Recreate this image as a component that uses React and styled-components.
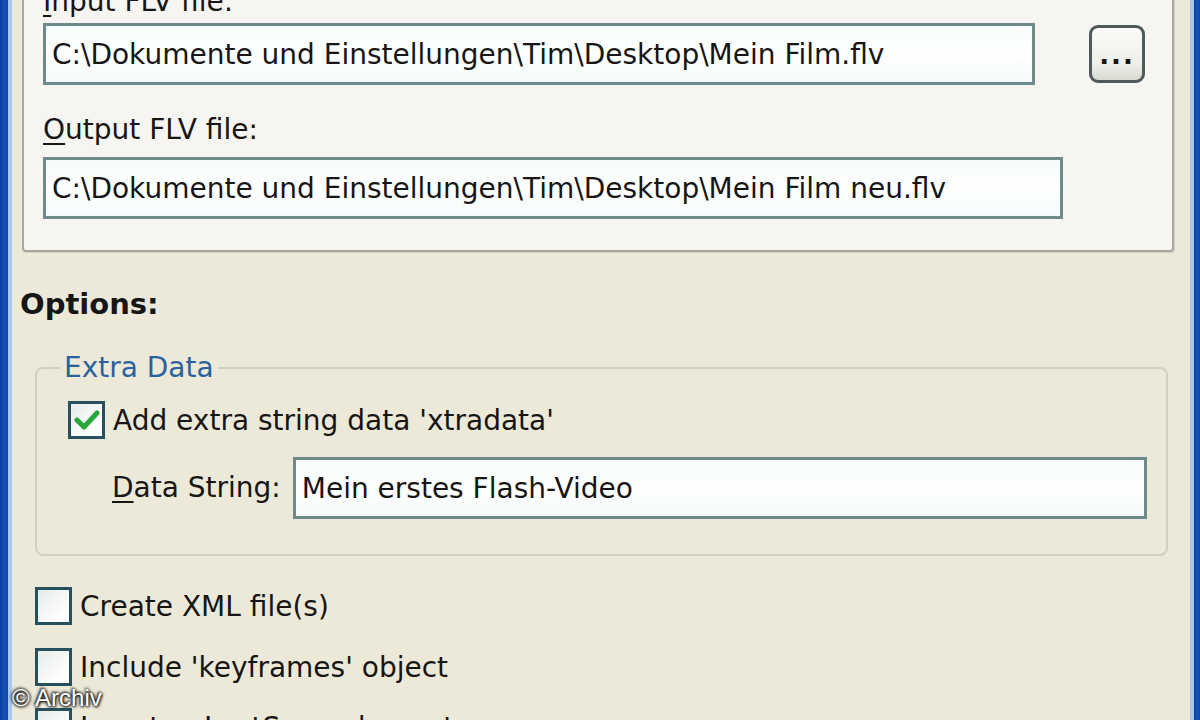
import React from "react";
import styled, { createGlobalStyle } from "styled-components";

const Global = createGlobalStyle`
  html, body { margin: 0; padding: 0; }
  body {
    background: #ece9d8;
    font-family: "DejaVu Sans", Tahoma, sans-serif;
    color: #161616;
    overflow: hidden;
  }
`;

const Window = styled.div`
  width: 1200px;
  height: 720px;
  display: flex;
  position: relative;
  overflow: hidden;
  background: #ece9d8;
`;

const SideBorder = styled.div`
  flex: 0 0 ${(p) => p.$w}px;
  display: flex;
  flex-direction: ${(p) => (p.$right ? "row-reverse" : "row")};
`;

const BorderDark = styled.div`
  flex: 1;
  background: linear-gradient(90deg, #0b3fa0, #1653b8 60%, #0c43a8);
`;

const BorderLight = styled.div`
  flex: 0 0 4px;
  background: #a9c8ef;
`;

const Content = styled.div`
  flex: 1;
  display: flex;
  flex-direction: column;
  padding-left: 10px;
  padding-right: 16px;
`;

const Panel = styled.div`
  margin-top: -25px;
  background: #f6f5f1;
  border: 2px solid #a7a6a0;
  border-radius: 4px;
  box-shadow: 1px 1px 0 #d4d1c4;
  padding: 8px 0 31px 19px;
  display: flex;
  flex-direction: column;
`;

const Label = styled.div`
  font-size: 28px;
  line-height: 34px;
  white-space: nowrap;
  margin: ${(p) => p.$m || "0"};
`;

const U = styled.span`
  text-decoration: underline;
  text-underline-offset: 4px;
  text-decoration-thickness: 2px;
`;

const Row = styled.div`
  display: flex;
  align-items: center;
  gap: ${(p) => p.$gap || 0}px;
  margin: ${(p) => p.$m || "0"};
`;

const TextBox = styled.div`
  box-sizing: border-box;
  width: ${(p) => p.$w}px;
  height: 62px;
  background: linear-gradient(180deg, #f6fbfc, #ffffff 50%, #f4fafb);
  border: 3px solid #6f8a8c;
  padding: 0 0 0 6px;
  display: flex;
  align-items: center;
  font-size: 28px;
  white-space: nowrap;
  overflow: hidden;
`;

const BrowseButton = styled.div`
  box-sizing: border-box;
  width: 56px;
  height: 58px;
  border: 3px solid #4e5a5c;
  border-radius: 9px;
  background: linear-gradient(180deg, #fbfbf9, #eeeeea 70%, #d9d8d0);
  display: flex;
  align-items: flex-end;
  justify-content: center;
  padding-bottom: 12px;
  font-size: 26px;
  font-weight: bold;
  letter-spacing: 2px;
  line-height: 1;
`;

const SectionTitle = styled.div`
  font-size: 29px;
  font-weight: bold;
  margin: 35px 0 0 -2px;
  line-height: 34px;
`;

const GroupBox = styled.fieldset`
  margin: 30px 0 0 13px;
  width: 1133px;
  box-sizing: border-box;
  border: 2px solid #d3cfc0;
  border-radius: 8px;
  padding: 0 0 35px 0;
  min-inline-size: 0;
`;

const Legend = styled.legend`
  color: #2a62a0;
  font-size: 28px;
  padding: 0 4px;
  margin-left: 23px;
`;

const CheckRow = styled.div`
  display: flex;
  align-items: center;
  gap: 8px;
  margin: ${(p) => p.$m || "0"};
  font-size: 28px;
  white-space: nowrap;
`;

const Box = styled.div`
  box-sizing: border-box;
  width: 37px;
  height: 38px;
  border: 3px solid #27505e;
  background: linear-gradient(135deg, #e6ece8, #ffffff 80%);
  display: flex;
  align-items: center;
  justify-content: center;
`;

const Watermark = styled.div`
  position: absolute;
  left: 12px;
  top: 684px;
  font-family: "Liberation Sans", Arial, sans-serif;
  font-size: 24px;
  color: #ffffff;
  text-shadow: 0 0 3px #000, 1px 1px 3px #000, -1px -1px 3px #333;
`;

function Check({ checked }) {
  return (
    <Box>
      {checked && (
        <svg width="26" height="24" viewBox="0 0 26 24">
          <path d="M3 12 L10 19 L23 5" fill="none" stroke="#2aa63a" strokeWidth="5" strokeLinejoin="round" strokeLinecap="round" />
        </svg>
      )}
    </Box>
  );
}

export default function App() {
  return (
    <>
      <Global />
      <Window>
        <SideBorder $w={12}>
          <BorderDark />
          <BorderLight />
        </SideBorder>
        <Content>
          <Panel>
            <Label>
              <U>I</U>nput FLV file:
            </Label>
            <Row $gap={54} $m="4px 0 0 0">
              <TextBox $w={992}>C:\Dokumente und Einstellungen\Tim\Desktop\Mein Film.flv</TextBox>
              <BrowseButton>...</BrowseButton>
            </Row>
            <Label $m="28px 0 0 0">
              <U>O</U>utput FLV file:
            </Label>
            <Row $m="10px 0 0 0">
              <TextBox $w={1020}>C:\Dokumente und Einstellungen\Tim\Desktop\Mein Film neu.flv</TextBox>
            </Row>
          </Panel>
          <SectionTitle>Options:</SectionTitle>
          <GroupBox>
            <Legend>Extra Data</Legend>
            <CheckRow $m="17px 0 0 31px">
              <Check checked />
              Add extra string data 'xtradata'
            </CheckRow>
            <Row $gap={12} $m="18px 0 0 75px">
              <Label>
                <U>D</U>ata String:
              </Label>
              <TextBox $w={854}>Mein erstes Flash-Video</TextBox>
            </Row>
          </GroupBox>
          <CheckRow $m="31px 0 0 13px">
            <Check />
            Create XML file(s)
          </CheckRow>
          <CheckRow $m="23px 0 0 13px">
            <Check />
            Include 'keyframes' object
          </CheckRow>
          <CheckRow $m="22px 0 0 13px">
            <Check />
            Insert onLastSecond event
          </CheckRow>
        </Content>
        <SideBorder $w={10} $right>
          <BorderDark />
          <BorderLight />
        </SideBorder>
        <Watermark>© Archiv</Watermark>
      </Window>
    </>
  );
}
